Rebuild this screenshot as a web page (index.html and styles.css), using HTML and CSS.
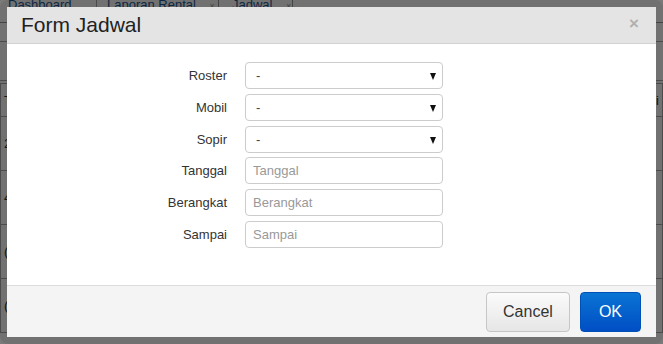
FILE: index.html
```html
<!DOCTYPE html>
<html lang="en">
<head>
    <meta charset="UTF-8">
    <meta name="viewport" content="width=device-width, initial-scale=1.0">
    <title>Form Jadwal</title>
    <link rel="stylesheet" href="styles.css">
</head>
<body>
    <!-- halaman di belakang dialog -->
    <div class="page">
        <ul class="tabs">
            <li class="tab tab-home">Dashboard</li>
            <li class="tab tab-rental">Laporan Rental <span class="tab-x">×</span></li>
            <li class="tab tab-jadwal">Jadwal <span class="tab-x">×</span></li>
        </ul>
        <div class="toolbar"></div>
        <table class="grid">
            <thead>
                <tr><th>Tanggal</th><th></th><th></th><th></th><th></th><th>Aksi</th></tr>
            </thead>
            <tbody>
                <tr><td>2</td><td></td><td></td><td></td><td></td><td></td></tr>
                <tr><td>4</td><td></td><td></td><td></td><td></td><td></td></tr>
                <tr><td>(</td><td></td><td></td><td></td><td></td><td></td></tr>
                <tr><td>(</td><td></td><td></td><td></td><td></td><td></td></tr>
            </tbody>
        </table>
    </div>
    <div class="overlay"></div>

    <div class="dialog">
        <div class="dialog-box">
            <div class="dialog-head">
                <h2>Form Jadwal</h2>
                <span class="close">×</span>
            </div>
            <form class="dialog-body">
                <label for="roster">Roster</label>
                <div class="select-wrap">
                    <select id="roster"><option>-</option></select>
                </div>
                <label for="mobil">Mobil</label>
                <div class="select-wrap">
                    <select id="mobil"><option>-</option></select>
                </div>
                <label for="sopir">Sopir</label>
                <div class="select-wrap">
                    <select id="sopir"><option>-</option></select>
                </div>
                <label for="tanggal">Tanggal</label>
                <input type="text" id="tanggal" placeholder="Tanggal">
                <label for="berangkat">Berangkat</label>
                <input type="text" id="berangkat" placeholder="Berangkat">
                <label for="sampai">Sampai</label>
                <input type="text" id="sampai" placeholder="Sampai">
            </form>
            <div class="dialog-foot">
                <button type="button" class="btn">Cancel</button>
                <button type="button" class="btn btn-primary">OK</button>
            </div>
        </div>
    </div>
</body>
</html>
```

FILE: styles.css
```css
body {
    font-family: "Liberation Sans", Arial, sans-serif;
    font-size: 13px;
    color: #333;
    background-color: #fff;
    margin: 0;
    width: 663px;
    height: 344px;
    overflow: hidden;
}

/* halaman belakang */
.page {
    width: 663px;
}

.tabs {
    display: flex;
    list-style: none;
    margin: 0;
    padding: 0 0 0 8px;
    height: 22px;
    border-bottom: 1px solid #999;
    line-height: 10px;
}

.tab {
    box-sizing: border-box;
    color: #1f5a96;
    text-decoration: underline;
    height: 22px;
    white-space: nowrap;
}

.tab-home {
    width: 89px;
    border-right: 1px solid #aaa;
}

.tab-rental {
    width: 122px;
    padding-left: 10px;
    border-right: 1px solid #999;
}

.tab-jadwal {
    width: 74px;
    padding-left: 13px;
    border-right: 1px solid #999;
}

.tab-x {
    color: #999;
    text-decoration: none;
    font-size: 9px;
    margin-left: 10px;
}

.toolbar {
    height: 18px;
    border-bottom: 1px solid #aaa;
}

.grid {
    width: 663px;
    margin-top: 38px;
    border-collapse: collapse;
}

.grid thead tr {
    border-top: 4px double #aaa;
}

.grid th,
.grid td {
    border: 1px solid #aaa;
    text-align: left;
    font-weight: normal;
    padding: 0 3px;
    height: 53px;
}

.grid th {
    height: 32px;
}

.grid th:nth-child(1), .grid td:nth-child(1) { width: 86px; }
.grid th:nth-child(2), .grid td:nth-child(2) { width: 62px; }
.grid th:nth-child(3), .grid td:nth-child(3) { width: 228px; }
.grid th:nth-child(4), .grid td:nth-child(4) { width: 124px; }
.grid th:nth-child(5), .grid td:nth-child(5) { width: 64px; }
.grid th:nth-child(6) { padding-left: 50px; }

.overlay {
    position: absolute;
    top: 0;
    left: 0;
    right: 0;
    bottom: 0;
    background: rgba(0, 0, 0, 0.52);
}

/* dialog */
.dialog {
    position: absolute;
    top: 0;
    left: 0;
    width: 649px;
    height: 330px;
    border: 7px solid rgba(0, 0, 0, 0.07);
    border-radius: 8px;
}

.dialog-box {
    display: flex;
    flex-direction: column;
    height: 100%;
    background: #fff;
}

.dialog-head {
    display: flex;
    align-items: center;
    justify-content: space-between;
    height: 36px;
    padding: 0 17px 0 14px;
    background: #e4e4e4;
    border-bottom: 1px solid #d2d2d2;
}

.dialog-head h2 {
    margin: 0;
    font-size: 21px;
    font-weight: normal;
    color: #222;
}

.close {
    color: #b0b0b0;
    font-size: 17px;
    font-weight: bold;
    margin-top: -2px;
}

.dialog-body {
    flex: 1;
    display: grid;
    grid-template-columns: 220px 198px;
    grid-auto-rows: 27px;
    column-gap: 18px;
    row-gap: 4.8px;
    align-content: start;
    align-items: center;
    margin: 0;
    padding-top: 18px;
}

.dialog-body label {
    text-align: right;
    color: #333;
}

.select-wrap {
    position: relative;
    height: 27px;
}

.select-wrap::after {
    content: "";
    position: absolute;
    top: 11px;
    right: 7px;
    border-left: 3.5px solid transparent;
    border-right: 3.5px solid transparent;
    border-top: 7px solid #111;
    pointer-events: none;
}

select,
input[type="text"] {
    box-sizing: border-box;
    width: 198px;
    height: 27px;
    margin: 0;
    padding: 0 7px;
    border: 1px solid #ccc;
    border-radius: 4px;
    background: #fff;
    font-family: inherit;
    font-size: 13px;
    color: #444;
}

select {
    appearance: none;
    -webkit-appearance: none;
    padding-left: 10px;
}

input::placeholder {
    color: #999;
}

.dialog-foot {
    display: flex;
    justify-content: flex-end;
    gap: 10px;
    height: 52px;
    padding: 6px 15px 0 0;
    box-sizing: border-box;
    background: #f4f4f4;
    border-top: 1px solid #dcdcdc;
}

.btn {
    height: 40px;
    padding: 0 16px;
    border: 1px solid #c6c6c6;
    border-radius: 4px;
    background: linear-gradient(#fbfbfb, #e6e6e6);
    font-family: inherit;
    font-size: 16px;
    color: #333;
    cursor: pointer;
}

.btn-primary {
    padding: 0 18px;
    border-color: #0050b8;
    background: linear-gradient(#0a74d4, #004ec4);
    color: #fff;
}
```
